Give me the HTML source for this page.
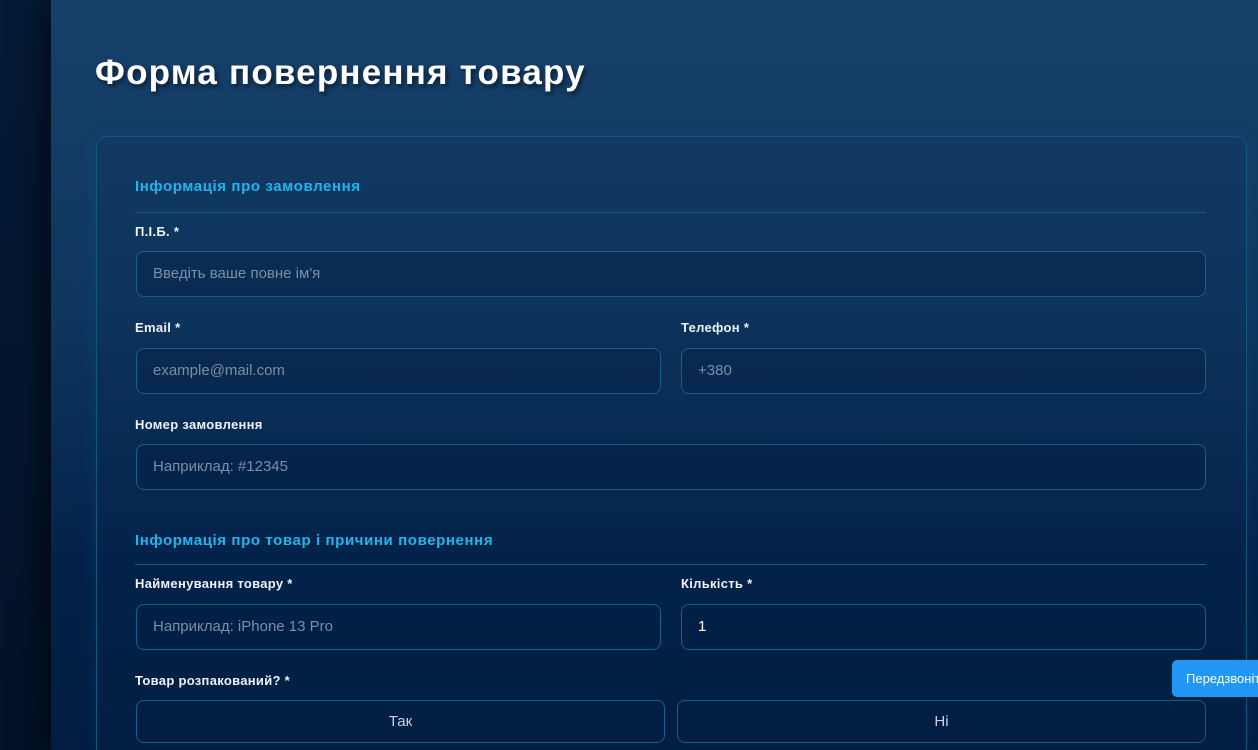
<!DOCTYPE html>
<html style="width:1258px;height:750px;overflow:hidden"><head><meta charset="utf-8"><style>
*{box-sizing:border-box;margin:0;padding:0}
body{width:1258px;height:750px;overflow:hidden;font-family:"Liberation Sans","DejaVu Sans",sans-serif;background:#021530;position:relative}
.side{position:absolute;left:0;top:0;width:51px;height:750px;background:linear-gradient(180deg,#041a36,#021228)}
.main{position:absolute;left:51px;top:0;width:1207px;height:750px;background:linear-gradient(180deg,#16406a 0%,#0f3760 40%,#03224a 75%,#021d40 100%);box-shadow:-10px 0 25px rgba(0,0,0,.5)}
h1{position:absolute;left:95px;top:53px;font-size:35px;font-weight:bold;color:#fff;letter-spacing:1.2px;text-shadow:2px 3px 5px rgba(0,0,0,.5)}
.card{position:absolute;left:96px;top:136px;width:1151px;height:614px;border:1px solid #11577f;border-bottom:none;border-radius:12px 12px 0 0;background:rgba(10,40,75,.15);box-shadow:0 0 18px rgba(20,120,190,.15)}
.sec{position:absolute;left:135px;font-size:15px;font-weight:bold;color:#1fb6ee;letter-spacing:.6px}
.hr{position:absolute;left:135px;width:1071px;height:1px;background:#165a84}
.lab{position:absolute;font-size:13px;font-weight:bold;color:#eef2f7;letter-spacing:.3px}
.in{position:absolute;height:46px;border:1px solid #13608e;border-radius:8px;background:rgba(3,30,65,.35);font-size:15px;color:#7b8ea5;padding-left:16px;line-height:44px}
.btn{position:absolute;height:43px;border:1px solid #13608e;border-radius:8px;background:rgba(3,30,65,.35);text-align:center;line-height:41px;font-size:15px;color:#c9d4e0}
.call{position:absolute;left:1172px;top:660px;width:86px;height:37px;background:#2196f3;border-radius:5px 0 0 5px;color:#fff;font-size:13px;line-height:37px;padding-left:14px;white-space:nowrap;overflow:hidden}
</style></head><body>
<div class="side"></div><div class="main"></div>
<h1>Форма повернення товару</h1>
<div class="card"></div>
<div class="sec" style="top:178px">Інформація про замовлення</div>
<div class="hr" style="top:212px"></div>
<div class="lab" style="left:135px;top:224px">П.І.Б. *</div>
<div class="in" style="left:136px;top:251px;width:1070px">Введіть ваше повне ім'я</div>
<div class="lab" style="left:135px;top:320px">Email *</div>
<div class="lab" style="left:681px;top:320px">Телефон *</div>
<div class="in" style="left:136px;top:348px;width:525px">example@mail.com</div>
<div class="in" style="left:681px;top:348px;width:525px">+380</div>
<div class="lab" style="left:135px;top:417px">Номер замовлення</div>
<div class="in" style="left:136px;top:444px;width:1070px">Наприклад: #12345</div>
<div class="sec" style="top:532px">Інформація про товар і причини повернення</div>
<div class="hr" style="top:564px"></div>
<div class="lab" style="left:135px;top:576px">Найменування товару *</div>
<div class="lab" style="left:681px;top:576px">Кількість *</div>
<div class="in" style="left:136px;top:604px;width:525px">Наприклад: iPhone 13 Pro</div>
<div class="in" style="left:681px;top:604px;width:525px;color:#fff">1</div>
<div class="lab" style="left:135px;top:673px">Товар розпакований? *</div>
<div class="btn" style="left:136px;top:700px;width:529px">Так</div>
<div class="btn" style="left:677px;top:700px;width:529px">Ні</div>
<div class="call">Передзвоніть</div>
</body></html>
